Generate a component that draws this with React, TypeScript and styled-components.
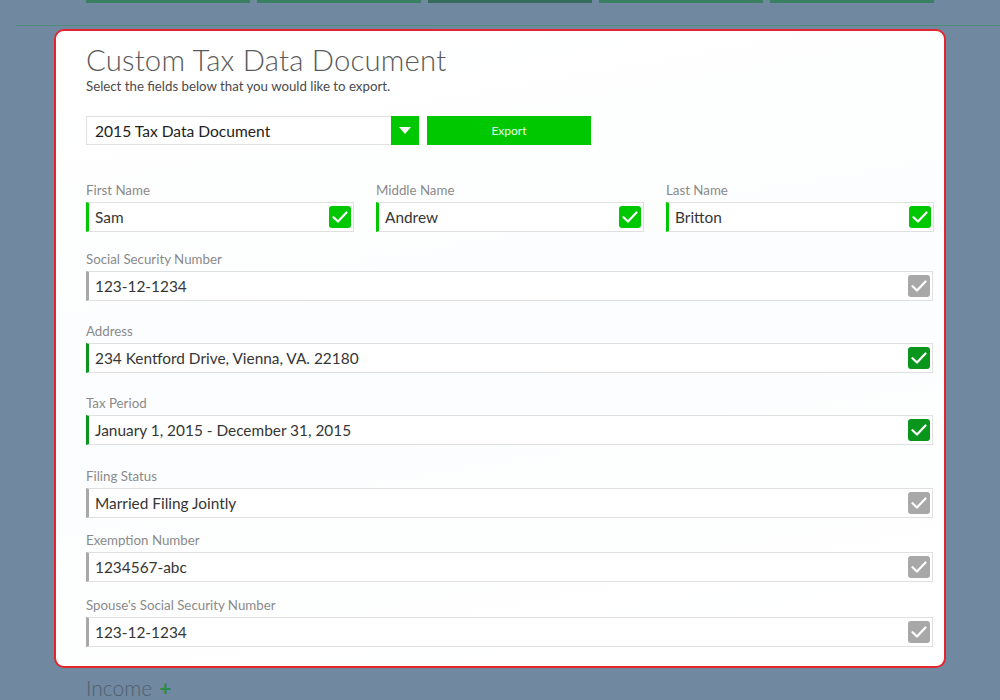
import React from "react";
import styled, { createGlobalStyle } from "styled-components";

const Global = createGlobalStyle`
  html, body { margin: 0; padding: 0; background: #7189a0; overflow: hidden; }
  body { font-family: Lato, "Open Sans", sans-serif; width: 1000px; height: 700px; }
`;

const Page = styled.div`
  width: 1000px;
  height: 700px;
  background: #7189a0;
  display: flex;
  flex-direction: column;
`;

const Tabs = styled.div`
  display: flex;
  gap: 7px;
  padding-left: 86px;
`;

const Tab = styled.div<{ $dark?: boolean }>`
  width: 164px;
  height: 3px;
  background: ${(p) => (p.$dark ? "#346b5c" : "#3a7f61")};
`;

const Divider = styled.div`
  margin: 22px 0 0 16px;
  height: 1px;
  background: #4f8a7a;
`;

const Card = styled.div`
  margin: 3px 0 0 54px;
  width: 892px;
  height: 641px;
  box-sizing: border-box;
  border: 2px solid #e3262d;
  border-radius: 10px;
  background: linear-gradient(170deg, #ffffff 0%, #fcfdfe 50%, #ffffff 100%);
  padding: 11px 11px 0 30px;
  display: flex;
  flex-direction: column;
`;

const Title = styled.h1`
  margin: 0;
  font-family: Lato, sans-serif;
  font-weight: 300;
  font-size: 29.3px;
  line-height: 36px;
  color: #5a5a5a;
  letter-spacing: 0.2px;
`;

const Subtitle = styled.p`
  margin: 0;
  font-size: 13.25px;
  line-height: 16px;
  color: #4a4a4a;
`;

const Controls = styled.div`
  display: flex;
  gap: 8px;
  margin-top: 22px;
`;

const Select = styled.div`
  width: 333px;
  height: 29px;
  box-sizing: border-box;
  border: 1px solid #e2e2e2;
  display: flex;
  align-items: stretch;
  background: #fff;
`;

const SelectText = styled.div`
  flex: 1;
  padding-left: 8px;
  display: flex;
  align-items: center;
  font-size: 15.6px;
  color: #222;
`;

const SelectArrow = styled.div`
  width: 28px;
  background: #00c800;
  display: flex;
  align-items: center;
  justify-content: center;
  margin: -1px -1px -1px 0;
`;

const ExportButton = styled.button`
  width: 164px;
  height: 29px;
  border: none;
  background: #00c800;
  color: #e8ffe8;
  font-family: Lato, sans-serif;
  font-size: 12px;
  cursor: pointer;
`;

const NameRow = styled.div`
  display: grid;
  grid-template-columns: repeat(3, 268px);
  column-gap: 22px;
  margin-top: 38px;
`;

const Field = styled.div<{ $mt?: number }>`
  display: flex;
  flex-direction: column;
  margin-top: ${(p) => p.$mt ?? 0}px;
`;

const Label = styled.label`
  font-size: 13.3px;
  line-height: 14px;
  color: #8a8a8a;
  margin-bottom: 5px;
`;

const InputBox = styled.div<{ $bar: string }>`
  height: 30px;
  box-sizing: border-box;
  border: 1px solid #e0e0e0;
  border-left: 3px solid ${(p) => p.$bar};
  display: flex;
  align-items: center;
  padding: 0 2px 0 6px;
  background: #fff;
  margin-bottom: -1px;
`;

const Value = styled.span`
  flex: 1;
  font-size: 15.4px;
  color: #363636;
`;

const Check = styled.div<{ $color: string }>`
  width: 22px;
  height: 22px;
  border-radius: 3px;
  background: ${(p) => p.$color};
  display: flex;
  align-items: center;
  justify-content: center;
`;

const Income = styled.div`
  margin: 7px 0 0 86px;
  font-family: Lato, sans-serif;
  font-weight: 300;
  font-size: 21px;
  color: #4d6072;
  display: flex;
  align-items: center;
  gap: 7px;
`;

const Plus = styled.span`
  color: #2e8a4a;
  font-weight: 700;
  font-size: 21px;
`;

const BRIGHT = "#00c800";
const DARK = "#0a951c";
const GRAY = "#a8a8a8";

const Tick = () => (
  <svg width="16" height="12" viewBox="0 0 16 12">
    <path d="M1.5 6.2 L6 10.5 L14.5 1.5" fill="none" stroke="#fff" strokeWidth="2.2" strokeLinecap="round" strokeLinejoin="round" />
  </svg>
);

const Input = ({ value, color }: { value: string; color: string }) => (
  <InputBox $bar={color}>
    <Value>{value}</Value>
    <Check $color={color}>
      <Tick />
    </Check>
  </InputBox>
);

const rows: { label: string; value: string; color: string; mt: number }[] = [
  { label: "Social Security Number", value: "123-12-1234", color: GRAY, mt: 21 },
  { label: "Address", value: "234 Kentford Drive, Vienna, VA. 22180", color: DARK, mt: 24 },
  { label: "Tax Period", value: "January 1, 2015 - December 31, 2015", color: DARK, mt: 24 },
  { label: "Filing Status", value: "Married Filing Jointly", color: GRAY, mt: 25 },
  { label: "Exemption Number", value: "1234567-abc", color: GRAY, mt: 16 },
  { label: "Spouse's Social Security Number", value: "123-12-1234", color: GRAY, mt: 17 },
];

export default function App() {
  return (
    <Page>
      <Global />
      <Tabs>
        <Tab />
        <Tab />
        <Tab $dark />
        <Tab />
        <Tab />
      </Tabs>
      <Divider />
      <Card>
        <Title>Custom Tax Data Document</Title>
        <Subtitle>Select the fields below that you would like to export.</Subtitle>
        <Controls>
          <Select>
            <SelectText>2015 Tax Data Document</SelectText>
            <SelectArrow>
              <svg width="12" height="8" viewBox="0 0 12 8">
                <path d="M0 0 H12 L6 7 Z" fill="#fff" />
              </svg>
            </SelectArrow>
          </Select>
          <ExportButton>Export</ExportButton>
        </Controls>
        <NameRow>
          <Field>
            <Label>First Name</Label>
            <Input value="Sam" color={BRIGHT} />
          </Field>
          <Field>
            <Label>Middle Name</Label>
            <Input value="Andrew" color={BRIGHT} />
          </Field>
          <Field>
            <Label>Last Name</Label>
            <Input value="Britton" color={BRIGHT} />
          </Field>
        </NameRow>
        {rows.map((r) => (
          <Field key={r.label} $mt={r.mt}>
            <Label>{r.label}</Label>
            <Input value={r.value} color={r.color} />
          </Field>
        ))}
      </Card>
      <Income>
        Income <Plus>+</Plus>
      </Income>
    </Page>
  );
}
